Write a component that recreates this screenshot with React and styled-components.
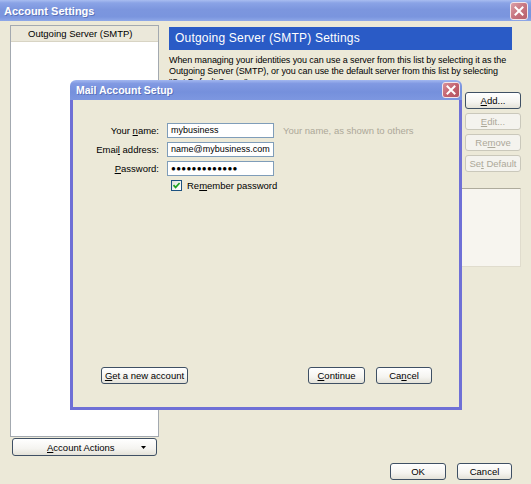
import React from 'react';
import styled, { createGlobalStyle } from 'styled-components';

const GlobalStyle = createGlobalStyle`
  html, body {
    margin: 0;
    padding: 0;
    background: #ece9d8;
  }
  body {
    font-family: "Liberation Sans", Arial, sans-serif;
    font-size: 9.5px;
    color: #000;
  }
`;

const xpTitle = `linear-gradient(to bottom, #a9bdf0 0%, #8aa3e6 14%, #7c96de 45%, #7a95de 80%, #8ea8e8 100%)`;

function CloseGlyph() {
  return (
    <svg width="10" height="10" viewBox="0 0 10 10">
      <path d="M1.5 1.5 L8.5 8.5 M8.5 1.5 L1.5 8.5" stroke="#fff" strokeWidth="2" strokeLinecap="square" />
    </svg>
  );
}

function Check() {
  return (
    <svg width="9" height="9" viewBox="0 0 9 9">
      <path d="M1.5 4.2 L3.6 6.4 L7.6 2" stroke="#21a121" strokeWidth="1.7" fill="none" />
    </svg>
  );
}

function DropArrow() {
  return (
    <svg width="5" height="3" viewBox="0 0 5 3">
      <path d="M0 0 H5 L2.5 3 Z" fill="#000" />
    </svg>
  );
}

export default function App() {
  return (
    <>
      <GlobalStyle />
      <Window>
        <TitleBar>
          <TitleText>Account Settings</TitleText>
          <CloseButton><CloseGlyph /></CloseButton>
        </TitleBar>

        <Main>
          <LeftColumn>
            <AccountList>
              <ListHeader>Outgoing Server (SMTP)</ListHeader>
            </AccountList>
            <ActionsButton>
              <span><u>A</u>ccount Actions</span>
              <DropArrow />
            </ActionsButton>
          </LeftColumn>

          <RightColumn>
            <PanelHeader>Outgoing Server (SMTP) Settings</PanelHeader>
            <Description>
              When managing your identities you can use a server from this list by selecting it as the<br />
              Outgoing Server (SMTP), or you can use the default server from this list by selecting<br />
              "Set Default Server".
            </Description>
            <ServerRow>
              <ServerList />
              <ButtonColumn>
                <Button><span><u>A</u>dd...</span></Button>
                <Button disabled><span><u>E</u>dit...</span></Button>
                <Button disabled><span>Re<u>m</u>ove</span></Button>
                <Button disabled><span>Se<u>t</u> Default</span></Button>
              </ButtonColumn>
            </ServerRow>
            <DetailsBox />
          </RightColumn>
        </Main>

        <Footer>
          <Button $w={56}>OK</Button>
          <Button $w={55}>Cancel</Button>
        </Footer>

        <Dialog>
          <DialogTitleBar>
            <DialogTitle>Mail Account Setup</DialogTitle>
            <DialogClose><CloseGlyph /></DialogClose>
          </DialogTitleBar>
          <DialogBody>
            <Form>
              <Label>Your <u>n</u>ame:</Label>
              <Field>mybusiness</Field>
              <Hint>Your name, as shown to others</Hint>

              <Label>Emai<u>l</u> address:</Label>
              <Field>name@mybusiness.com</Field>
              <span />

              <Label><u>P</u>assword:</Label>
              <Field $dots>●●●●●●●●●●●●●</Field>
              <span />

              <CheckRow>
                <CheckBox><Check /></CheckBox>
                <span>Re<u>m</u>ember password</span>
              </CheckRow>
            </Form>
            <DialogButtons>
              <Button $w={87}><span><u>G</u>et a new account</span></Button>
              <Spacer />
              <Button $w={57}><span><u>C</u>ontinue</span></Button>
              <Button $w={56}><span>Ca<u>n</u>cel</span></Button>
            </DialogButtons>
          </DialogBody>
        </Dialog>
      </Window>
    </>
  );
}

const Window = styled.div`
  position: relative;
  width: 531px;
  height: 484px;
  display: flex;
  flex-direction: column;
  background: #ece9d8;
  overflow: hidden;
`;

const TitleBar = styled.div`
  height: 21px;
  flex-shrink: 0;
  display: flex;
  align-items: center;
  justify-content: space-between;
  padding: 0 3px 0 4px;
  background: ${xpTitle};
`;

const TitleText = styled.span`
  color: #fff;
  font-weight: bold;
  font-size: 11px;
  text-shadow: 1px 1px 0 rgba(60, 80, 150, 0.5);
`;

const CloseButton = styled.div`
  width: 18px;
  height: 18px;
  box-sizing: border-box;
  border: 1px solid #f2e6ea;
  border-radius: 3px;
  background: linear-gradient(135deg, #dca0a8 0%, #c77580 50%, #b8606c 100%);
  display: flex;
  align-items: center;
  justify-content: center;
`;

const Main = styled.div`
  flex: 1;
  min-height: 0;
  display: flex;
  padding: 4px 10px 0 10px;
`;

const LeftColumn = styled.div`
  width: 149px;
  display: flex;
  flex-direction: column;
`;

const AccountList = styled.div`
  flex: 1;
  background: #fff;
  border: 1px solid #a3a9b0;
`;

const ListHeader = styled.div`
  height: 15px;
  line-height: 15px;
  padding-left: 17px;
  background: #ebe8da;
  border-bottom: 1px solid #d8d4c4;
`;

const Button = styled.div`
  box-sizing: border-box;
  width: ${p => (p.$w ? `${p.$w}px` : 'auto')};
  height: 17px;
  display: flex;
  align-items: center;
  justify-content: center;
  border: 1px solid ${p => (p.disabled ? '#cac8bb' : '#3f5064')};
  border-radius: 3px;
  background: ${p => (p.disabled
    ? '#f4f3ee'
    : 'linear-gradient(to bottom, #ffffff 0%, #f5f4f0 60%, #e4e2d8 100%)')};
  color: ${p => (p.disabled ? '#aca899' : '#000')};
  white-space: nowrap;
`;

const ActionsButton = styled(Button)`
  margin: 1px 2px 0;
  height: 18px;
  justify-content: space-between;
  padding: 0 10px 0 34px;
`;

const RightColumn = styled.div`
  flex: 1;
  min-width: 0;
  margin-left: 10px;
  display: flex;
  flex-direction: column;
`;

const PanelHeader = styled.div`
  margin: 2px 9px 0 0;
  height: 23px;
  line-height: 23px;
  padding-left: 6px;
  background: #2a5bc6;
  color: #fff;
  font-size: 12px;
  letter-spacing: 0.2px;
`;

const Description = styled.div`
  margin-top: 5px;
  line-height: 11px;
  height: 33px;
  font-size: 9px;
  letter-spacing: -0.08px;
  white-space: nowrap;
`;

const ServerRow = styled.div`
  margin-top: 4px;
  display: flex;
  gap: 5px;
`;

const ServerList = styled.div`
  flex: 1;
  height: 83px;
  background: #fff;
  border: 1px solid #a3a9b0;
`;

const ButtonColumn = styled.div`
  width: 56px;
  display: flex;
  flex-direction: column;
  gap: 4px;
`;

const DetailsBox = styled.div`
  margin-top: 11px;
  height: 77px;
  background: #f7f5ef;
  border: 1px solid #e0dccd;
  border-top: 1px solid #aeab9c;
`;

const Footer = styled.div`
  display: flex;
  justify-content: flex-end;
  gap: 11px;
  padding: 7px 19px 4px 0;
`;

const Dialog = styled.div`
  position: absolute;
  left: 70px;
  top: 80px;
  width: 392px;
  height: 330px;
  display: flex;
  flex-direction: column;
`;

const DialogTitleBar = styled.div`
  height: 20px;
  display: flex;
  align-items: center;
  justify-content: space-between;
  padding: 0 2px 0 6px;
  border-radius: 6px 6px 0 0;
  background: linear-gradient(to bottom, #a3b8f0 0%, #8199e2 18%, #7590dc 60%, #7d97e0 100%);
`;

const DialogTitle = styled(TitleText)`
  font-size: 10.5px;
`;

const DialogClose = styled(CloseButton)`
  height: 16px;
  background: linear-gradient(135deg, #d9929a 0%, #c36370 50%, #b4525f 100%);
`;

const DialogBody = styled.div`
  flex: 1;
  display: flex;
  flex-direction: column;
  background: #ece9d8;
  border: 3px solid #6f70d6;
  border-top: none;
`;

const Form = styled.div`
  display: grid;
  grid-template-columns: 74px 107px auto;
  column-gap: 8px;
  row-gap: 4px;
  align-items: center;
  padding: 23px 0 0 12px;
`;

const Label = styled.div`
  text-align: right;
`;

const Field = styled.div`
  box-sizing: border-box;
  height: 15px;
  line-height: 13px;
  padding-left: 3px;
  background: #fff;
  border: 1px solid #7f9db9;
  white-space: nowrap;
  overflow: hidden;
  font-size: ${p => (p.$dots ? '8px' : '9px')};
  letter-spacing: ${p => (p.$dots ? '0.3px' : '0')};
`;

const Hint = styled.div`
  color: #aca899;
  padding-left: 1px;
`;

const CheckRow = styled.div`
  grid-column: 2 / 4;
  display: flex;
  align-items: center;
  gap: 5px;
  padding-left: 4px;
`;

const CheckBox = styled.div`
  box-sizing: border-box;
  width: 11px;
  height: 11px;
  border: 1px solid #1c5180;
  background: linear-gradient(135deg, #dcdcd7 0%, #f7f7f5 60%, #ffffff 100%);
  display: flex;
  align-items: center;
  justify-content: center;
`;

const DialogButtons = styled.div`
  margin-top: auto;
  display: flex;
  gap: 11px;
  padding: 0 27px 23px 28px;
`;

const Spacer = styled.div`
  flex: 1;
`;
